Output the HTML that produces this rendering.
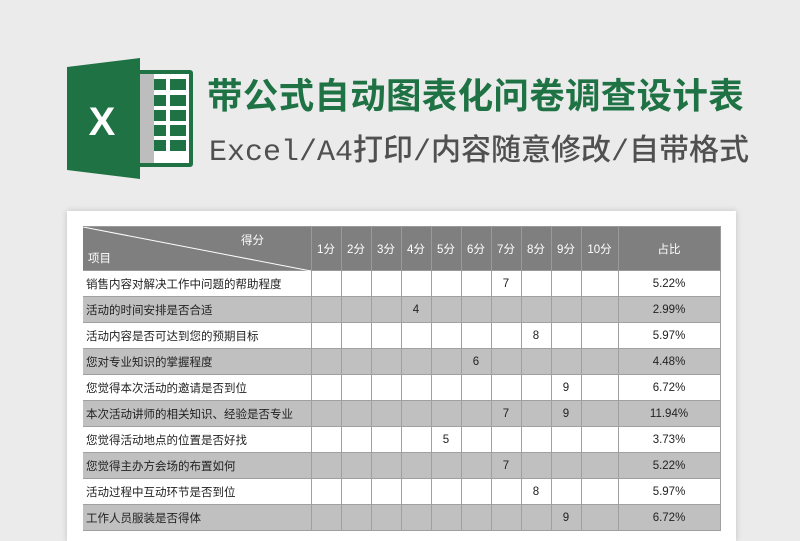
<!DOCTYPE html>
<html><head><meta charset="utf-8"><style>
body{margin:0;width:800px;height:526px;background:#ebebeb;position:relative;overflow:hidden;font-family:"Liberation Sans","Noto Sans CJK SC",sans-serif}
.t1{position:absolute;left:207px;top:70px;font-size:35.5px;font-weight:bold;color:#1e7244;font-family:"Noto Sans CJK SC",sans-serif;white-space:nowrap;letter-spacing:0.3px;line-height:48px}
.t2{position:absolute;left:209px;top:131px;font-size:30px;color:#505050;font-family:"Liberation Mono","Noto Sans CJK SC",monospace;white-space:nowrap;line-height:44px;letter-spacing:0px;font-weight:500}
.card{position:absolute;left:67px;top:211px;width:669px;height:330px;background:#fff;box-shadow:0 0 6px rgba(0,0,0,.18)}
table{position:absolute;left:83px;top:226px;border-collapse:collapse;table-layout:fixed;font-size:11.5px;color:#222;font-family:"Liberation Sans","Noto Sans CJK SC",sans-serif}
td{border:1px solid #a0a0a0;height:25px;padding:0;text-align:center}
td.q{text-align:left;padding-left:3px;border-left:none}
tr.h td{background:#7f7f7f;color:#fff;height:43px;border-color:#9a9a9a}
tr.g td{background:#c0c0c0}
</style></head><body>
<svg style="position:absolute;left:60px;top:55px" width="140" height="130" viewBox="0 0 140 130">
<rect x="76" y="15" width="57" height="97" rx="3" fill="#1f7244"/>
<rect x="80" y="19" width="49" height="89" fill="#fff"/>
<rect x="80" y="19" width="14" height="89" fill="#bdbdbd"/>
<g fill="#1f7244">
<rect x="94" y="24" width="12" height="11"/><rect x="110" y="24" width="16" height="11"/>
<rect x="94" y="40" width="12" height="11"/><rect x="110" y="40" width="16" height="11"/>
<rect x="94" y="55" width="12" height="11"/><rect x="110" y="55" width="16" height="11"/>
<rect x="94" y="70" width="12" height="11"/><rect x="110" y="70" width="16" height="11"/>
<rect x="94" y="85" width="12" height="11"/><rect x="110" y="85" width="16" height="11"/>
</g>
<path d="M7 12 L80 3 L80 124 L7 115 Z" fill="#1f7244"/>
<text x="42" y="80" font-family="Liberation Sans" font-weight="bold" font-size="40" fill="#fff" text-anchor="middle">X</text>
</svg>
<div class="t1">带公式自动图表化问卷调查设计表</div>
<div class="t2">Excel/A4打印/内容随意修改/自带格式</div>
<div class="card"></div>
<table>
<colgroup><col style="width:228px"><col style="width:30px"><col style="width:30px"><col style="width:30px"><col style="width:30px"><col style="width:30px"><col style="width:30px"><col style="width:30px"><col style="width:30px"><col style="width:30px"><col style="width:37px"><col style="width:102px"></colgroup>
<tr class="h"><td style="position:relative;border-left:none;text-align:left"><svg style="position:absolute;left:0;top:0" width="228" height="44"><line x1="0" y1="0" x2="228" y2="44" stroke="#fff" stroke-width="1"/></svg><span style="position:absolute;left:158px;top:5px">得分</span><span style="position:absolute;left:5px;top:23px">项目</span></td><td>1分</td><td>2分</td><td>3分</td><td>4分</td><td>5分</td><td>6分</td><td>7分</td><td>8分</td><td>9分</td><td>10分</td><td>占比</td></tr>
<tr><td class="q">销售内容对解决工作中问题的帮助程度</td><td></td><td></td><td></td><td></td><td></td><td></td><td>7</td><td></td><td></td><td></td><td>5.22%</td></tr>
<tr class="g"><td class="q">活动的时间安排是否合适</td><td></td><td></td><td></td><td>4</td><td></td><td></td><td></td><td></td><td></td><td></td><td>2.99%</td></tr>
<tr><td class="q">活动内容是否可达到您的预期目标</td><td></td><td></td><td></td><td></td><td></td><td></td><td></td><td>8</td><td></td><td></td><td>5.97%</td></tr>
<tr class="g"><td class="q">您对专业知识的掌握程度</td><td></td><td></td><td></td><td></td><td></td><td>6</td><td></td><td></td><td></td><td></td><td>4.48%</td></tr>
<tr><td class="q">您觉得本次活动的邀请是否到位</td><td></td><td></td><td></td><td></td><td></td><td></td><td></td><td></td><td>9</td><td></td><td>6.72%</td></tr>
<tr class="g"><td class="q">本次活动讲师的相关知识、经验是否专业</td><td></td><td></td><td></td><td></td><td></td><td></td><td>7</td><td></td><td>9</td><td></td><td>11.94%</td></tr>
<tr><td class="q">您觉得活动地点的位置是否好找</td><td></td><td></td><td></td><td></td><td>5</td><td></td><td></td><td></td><td></td><td></td><td>3.73%</td></tr>
<tr class="g"><td class="q">您觉得主办方会场的布置如何</td><td></td><td></td><td></td><td></td><td></td><td></td><td>7</td><td></td><td></td><td></td><td>5.22%</td></tr>
<tr><td class="q">活动过程中互动环节是否到位</td><td></td><td></td><td></td><td></td><td></td><td></td><td></td><td>8</td><td></td><td></td><td>5.97%</td></tr>
<tr class="g"><td class="q">工作人员服装是否得体</td><td></td><td></td><td></td><td></td><td></td><td></td><td></td><td></td><td>9</td><td></td><td>6.72%</td></tr>
</table>
</body></html>
